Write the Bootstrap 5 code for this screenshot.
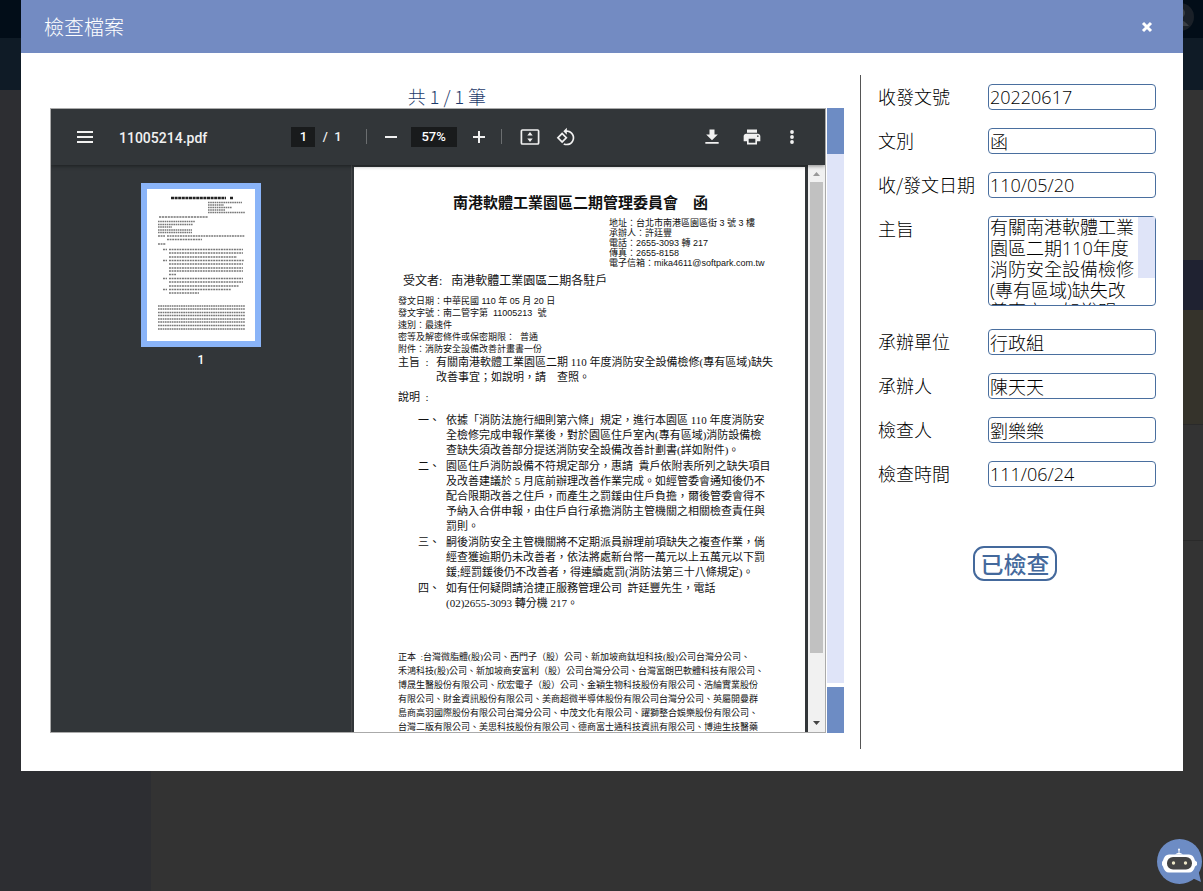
<!DOCTYPE html>
<html lang="zh-Hant">
<head>
<meta charset="utf-8">
<meta name="viewport" content="width=device-width, initial-scale=1">
<title>檢查檔案</title>
<link rel="stylesheet" href="https://cdn.jsdelivr.net/npm/bootstrap@5.3.0/dist/css/bootstrap.min.css">
<style>
  body { font-family: "Noto Sans CJK TC", sans-serif; font-weight: 300; background: #333; color: #000; overflow: hidden; }
  .app-top { height: 38px; background: #020d18; }
  .app-nav { height: 52px; background: #0f1b26; }
  .app-side { flex: 0 0 151px; background: #2d2e32; }
  .app-strip { height: 50px; margin-top: 170px; background: #1f2231; }
  .app-note { height: 115px; background: #35332b; border-bottom: 1px solid #2a2a2a; }
  .app-line { height: 116px; border-bottom: 1px solid #2a2a2a; }

  .check-dialog { max-width: none; margin: 0 20px 0 21px; }
  .check-head { height: 53px; background: #738bc2; color: #fff; padding: 0 28px 0 23px; }
  .check-head h1 { font-size: 20px; font-weight: 300; }
  .check-body { padding: 22px 27px 22px 29px; }
  .file-side { min-width: 0; padding-bottom: 16px; }

  .count-line { height: 33px; line-height: 42px; font-size: 18px; color: #1d3a6b; }
  .viewer { height: calc(100vh - 266px); }
  .outer-bar { flex: 0 0 18px; padding-left: 1px; }
  .outer-end { height: 46px; background: #6d8cc4; }
  .outer-track { background: #dfe4f8; margin-bottom: 4px; }
  .pdf { background: #323639; border: 1px solid #aaa; font-family: Roboto, sans-serif; }
  .pdf-tools { height: 56px; padding: 0 21px 0 22px; color: #f1f1f1; box-shadow: 0 1px 4px rgba(0,0,0,.45); z-index: 1; font-size: 13px; font-weight: 500; }
  .tool-end { flex: 1 1 0; }
  .tool-mid { margin-right: 4px; }
  .tool-btn { background: none; border: 0; padding: 0; width: 24px; height: 24px; color: #f1f1f1; display: flex; align-items: center; justify-content: center; }
  .close-btn { width: 16px; color: #fff; }
  .pdf-name { font-size: 14px; font-weight: 500; line-height: 24px; margin-left: 22px; padding-top: 2px; }
  .dark-in { background: #191b1c; border: 0; color: #fff; height: 20px; padding: 0; text-align: center; font-weight: 500; }
  .in-page { width: 24px; }
  .in-zoom { width: 46px; }
  .tool-sep { width: 1px; height: 15px; background: #6b6e70; }
  .thumbs { flex: 0 0 301px; padding-top: 18px; border-right: 1px solid #46484a; color: #fff; font-size: 12px; font-weight: 500; }
  .thumb-frame { width: 120px; border: 6px solid #8ab4f8; background: #fff; }
  .pdf-page { background: #fff; margin: 2px 3px 0 2px; padding: 26px 36px 0 44px; font-family: "Liberation Serif", "Noto Sans CJK TC", sans-serif; font-weight: 400; font-size: 11px; line-height: 15px; color: #111; overflow: hidden; white-space: nowrap; }
  .doc-title { font-size: 15px; line-height: 20px; font-weight: 700; padding-left: 55px; margin: 0 0 5px; }
  .doc-addr { font: 400 9px/10px "Liberation Sans", "Noto Sans CJK TC", sans-serif; padding-left: 211px; margin-bottom: 5px; }
  .doc-to { font-size: 12px; line-height: 16px; padding-left: 5px; margin-bottom: 6px; }
  .doc-meta { font: 400 9px/12px "Liberation Sans", "Noto Sans CJK TC", sans-serif; }
  .doc-key { flex: 0 0 38px; }
  .doc-no { flex: 0 0 28px; }
  .doc-desc { margin-top: 5px; }
  .doc-list { gap: 1px; margin: 8px 0 39px 20px; }
  .doc-cc { font-size: 9px; line-height: 14px; }
  .inner-bar { flex: 0 0 17px; background: #f1f1f1; }
  .inner-thumb { width: 13px; flex: 0 0 83%; background: #c1c1c1; }

  .form-side { flex: 0 0 296px; border-left: 1px solid #555; margin-left: 16px; padding: 9px 0 0 17px; font-size: 18px; }
  .form-side label { flex: 0 0 110px; line-height: 24px; }
  .field-row { margin-bottom: 18px; }
  .field-in { min-width: 0; width: 100%; height: 26px; border: 1px solid #4a6f9f; border-radius: 4px; padding: 0 1px; font-family: "Open Sans", "Noto Sans CJK TC", sans-serif; font-size: 18px; font-weight: 300; line-height: 21px; color: #000; }
  .field-area { height: 90px; resize: none; overflow: hidden; padding-right: 18px; display: block; }
  .area-row { margin-bottom: 23px; }
  .area-thumb { top: 1px; right: 1px; width: 17px; height: 61px; background: #dfe4f8; }
  .done-btn { margin-top: 41px; width: 84px; height: 35px; border: 2px solid #44699c; border-radius: 11px; background: #fff; color: #44699c; font-size: 23px; font-weight: 500; line-height: 26px; padding: 0 0 2px; }
  .bot { right: 0; bottom: 6px; z-index: 1060; border: 0; padding: 0; background: none; line-height: 0; }
</style>
</head>
<body>
<div class="vh-100 d-flex flex-column">
  <div class="app-top d-flex justify-content-end">
    <svg width="35" height="38" viewBox="0 0 35 38"><circle cx="12" cy="17" r="14" fill="#1a2028"/><circle cx="12" cy="13" r="5" fill="#3b3f45"/><path d="M1 26q11-12 20 0z" fill="#3b3f45"/></svg>
  </div>
  <div class="app-nav"></div>
  <div class="d-flex flex-grow-1">
    <div class="app-side"></div>
    <div class="flex-grow-1"><div class="app-strip"></div><div class="app-note"></div><div class="app-line"></div></div>
  </div>
</div>

<div class="modal d-block" tabindex="-1" role="dialog" aria-labelledby="dlgTitle">
  <div class="modal-dialog check-dialog">
    <div class="modal-content border-0 rounded-0">
      <div class="check-head d-flex align-items-center justify-content-between">
        <h1 id="dlgTitle" class="m-0">檢查檔案</h1>
        <button class="tool-btn close-btn" type="button" aria-label="關閉"><svg width="12" height="12" viewBox="0 0 12 12"><path d="M2 2l8 8M10 2l-8 8" stroke="currentColor" stroke-width="3"/></svg></button>
      </div>
      <div class="check-body d-flex">
        <div class="file-side flex-grow-1 d-flex flex-column">
          <div class="count-line text-center">共 1 / 1 筆</div>
          <div class="viewer d-flex">
            <div class="pdf flex-grow-1 d-flex flex-column overflow-hidden">
              <div class="pdf-tools d-flex align-items-center position-relative">
                <div class="tool-end d-flex align-items-center">
                  <button class="tool-btn" type="button" aria-label="選單"><svg width="16" height="12" viewBox="0 0 16 12"><path d="M0 1h16M0 6h16M0 11h16" stroke="currentColor" stroke-width="2"/></svg></button>
                  <span class="pdf-name">11005214.pdf</span>
                </div>
                <div class="tool-mid d-flex align-items-center">
                  <input class="dark-in in-page" value="1" aria-label="頁碼"><span class="ms-1 me-4">&nbsp;/&nbsp; 1</span>
                  <span class="tool-sep me-2"></span>
                  <button class="tool-btn ms-1 me-2" type="button" aria-label="縮小"><svg width="12" height="12" viewBox="0 0 12 12"><path d="M0 6h12" stroke="currentColor" stroke-width="2"/></svg></button>
                  <input class="dark-in in-zoom" value="57%" aria-label="縮放">
                  <button class="tool-btn mx-2 ps-1" type="button" aria-label="放大"><svg width="12" height="12" viewBox="0 0 12 12"><path d="M0 6h12M6 0v12" stroke="currentColor" stroke-width="2"/></svg></button>
                  <span class="tool-sep ms-1 me-3"></span>
                  <button class="tool-btn" type="button" aria-label="符合頁面大小"><svg width="20" height="20" viewBox="0 0 20 20"><rect x="1.4" y="3" width="17.2" height="14" rx="1" fill="none" stroke="currentColor" stroke-width="1.7"/><path d="M10 5l2.7 3.4H7.300zM10 15l2.700-3.400H7.300z" fill="currentColor"/></svg></button>
                  <button class="tool-btn ms-2 ps-2 me-2" type="button" aria-label="旋轉"><svg class="flex-shrink-0" width="20" height="20" viewBox="0 0 24 24" fill="currentColor"><path d="M7.340 6.410L.86 12.900l6.490 6.480 6.490-6.480-6.500-6.490zM3.690 12.900l3.660-3.660L11 12.900l-3.660 3.660-3.650-3.660zm15.670-6.260C17.610 4.880 15.300 4 13 4V.76L8.760 5 13 9.240V6c1.790 0 3.580.68 4.950 2.050 2.730 2.730 2.730 7.170 0 9.900C16.580 19.320 14.790 20 13 20c-.97 0-1.940-.21-2.840-.61l-1.490 1.490C10.020 21.620 11.510 22 13 22c2.300 0 4.610-.88 6.360-2.640 3.520-3.510 3.520-9.210 0-12.720z"/></svg></button>
                </div>
                <div class="tool-end d-flex align-items-center justify-content-end gap-3">
                  <button class="tool-btn" type="button" aria-label="下載"><svg width="20" height="20" viewBox="0 0 24 24" fill="currentColor"><path d="M19 9h-4V3H9v6H5l7 7 7-7zM4 18v2.200h16V18z"/></svg></button>
                  <button class="tool-btn" type="button" aria-label="列印"><svg width="20" height="20" viewBox="0 0 24 24" fill="currentColor"><path d="M19 8H5c-1.660 0-3 1.340-3 3v6h4v4h12v-4h4v-6c0-1.660-1.340-3-3-3zm-3 11H8v-5h8v5zm3-7c-.55 0-1-.45-1-1s.45-1 1-1 1 .45 1 1-.45 1-1 1zm-1-9H6v4h12V3z"/></svg></button>
                  <button class="tool-btn" type="button" aria-label="更多"><svg width="4" height="16" viewBox="0 0 4 16" fill="currentColor"><circle cx="2" cy="3" r="1.900"/><circle cx="2" cy="8" r="1.900"/><circle cx="2" cy="13" r="1.900"/></svg></button>
                </div>
              </div>
              <div class="d-flex flex-grow-1 overflow-hidden">
                <div class="thumbs d-flex flex-column align-items-center">
                  <div class="thumb-frame">
                    <svg class="d-block w-100" viewBox="0 0 108 152" fill="none" stroke="#777" stroke-width="1.300" role="img" aria-label="第 1 頁縮圖">
                      <path stroke="#222" stroke-width="2.600" stroke-dasharray="3 .6" d="M24 9h55M83 9h3"/>
                      <path stroke-dasharray="1.600 .6" d="M61 13.500h34M61 16h16M61 18.500h24M61 21h17M61 23.500h37"/>
                      <path stroke-dasharray="2.200 .7" d="M12 28h49"/>
                      <path stroke-dasharray="1.600 .6" d="M11 32.500h37M11 35.500h35M11 38h14M11 41h34M11 43.500h34"/>
                      <path stroke-dasharray="1.900 .7" d="M11 47h7M20 47h78M20 50.500h35M11 55h8M16 60.500h4M22 60.500h74M22 64h74M22 68h68M16 71.500h4M22 71.500h75M22 75h74M22 79h74M22 82h74M22 85.500h7M16 89.500h4M22 89.500h74M22 93h74M22 97h70M16 100.500h4M22 100.500h62M22 104h30"/>
                      <path stroke-dasharray="1.700 .6" d="M11 117h87M11 120h87M11 123.500h87M11 126.500h87M11 130h87M11 133h87M11 136.500h87M11 140h87"/>
                    </svg>
                  </div>
                  <span class="mt-1">1</span>
                </div>
                <article class="pdf-page flex-grow-1">
                  <h2 class="doc-title">南港軟體工業園區二期管理委員會　函</h2>
                  <div class="doc-addr">
                    <div>地址：台北市南港區園區街 3 號 3 樓</div>
                    <div>承辦人：許廷豐</div>
                    <div>電話：2655-3093 轉 217</div>
                    <div>傳真：2655-8158</div>
                    <div>電子信箱：mika4611@softpark.com.tw</div>
                  </div>
                  <div class="doc-to">受文者:&nbsp;&nbsp; 南港軟體工業園區二期各駐戶</div>
                  <div class="doc-meta">
                    <div>發文日期：中華民國 110 年 05 月 20 日</div>
                    <div>發文字號：南二管字第&nbsp; 11005213&nbsp; 號</div>
                    <div>速別：最速件</div>
                    <div>密等及解密條件或保密期限：&nbsp; 普通</div>
                    <div>附件：消防安全設備改善計畫書一份</div>
                  </div>
                  <div class="d-flex"><div class="doc-key">主旨&nbsp; :</div><div>有關南港軟體工業園區二期 110 年度消防安全設備檢修(專有區域)缺失<br>改善事宜；如說明，請　查照。</div></div>
                  <div class="doc-desc">說明&nbsp; :</div>
                  <div class="doc-list d-flex flex-column">
                    <div class="d-flex"><div class="doc-no">一、</div><div>依據「消防法施行細則第六條」規定，進行本園區 110 年度消防安<br>全檢修完成申報作業後，對於園區住戶室內(專有區域)消防設備檢<br>查缺失須改善部分提送消防安全設備改善計劃書(詳如附件)。</div></div>
                    <div class="d-flex"><div class="doc-no">二、</div><div>園區住戶消防設備不符規定部分，惠請&nbsp; 貴戶依附表所列之缺失項目<br>及改善建議於 5 月底前辦理改善作業完成。如經管委會通知後仍不<br>配合限期改善之住戶，而產生之罰鍰由住戶負擔，爾後管委會得不<br>予納入合併申報，由住戶自行承擔消防主管機關之相關檢查責任與<br>罰則。</div></div>
                    <div class="d-flex"><div class="doc-no">三、</div><div>嗣後消防安全主管機關將不定期派員辦理前項缺失之複查作業，倘<br>經查獲逾期仍未改善者，依法將處新台幣一萬元以上五萬元以下罰<br>鍰;經罰鍰後仍不改善者，得連續處罰(消防法第三十八條規定)。</div></div>
                    <div class="d-flex"><div class="doc-no">四、</div><div>如有任何疑問請洽捷正服務管理公司&nbsp; 許廷豐先生，電話<br>(02)2655-3093 轉分機 217。</div></div>
                  </div>
                  <div class="doc-cc">正本&nbsp; :台灣微脂體(股)公司、西門子（股）公司、新加坡商鈦坦科技(股)公司台灣分公司、<br>禾鴻科技(股)公司、新加坡商安富利（股）公司台灣分公司、台灣富朗巴軟體科技有限公司、<br>博晟生醫股份有限公司、欣宏電子（股）公司、金穎生物科技股份有限公司、浩綸實業股份<br>有限公司、財金資訊股份有限公司、美商超微半導体股份有限公司台灣分公司、英屬開曼群<br>島商高羽國際股份有限公司台灣分公司、中茂文化有限公司、躍獅整合娛樂股份有限公司、<br>台灣二版有限公司、美思科技股份有限公司、德商富士通科技資訊有限公司、博迪生技醫藥</div>
                </article>
                <div class="inner-bar d-flex flex-column align-items-center">
                  <svg width="17" height="17" viewBox="0 0 17 17" class="flex-shrink-0"><path d="M5 11h7l-3.500-4z" fill="#999"/></svg>
                  <div class="inner-thumb"></div>
                  <svg width="17" height="17" viewBox="0 0 17 17" class="flex-shrink-0 mt-auto"><path d="M5 6h7l-3.500 4z" fill="#444"/></svg>
                </div>
              </div>
            </div>
            <div class="outer-bar d-flex flex-column">
              <div class="outer-end"></div>
              <div class="outer-track flex-grow-1"></div>
              <div class="outer-end"></div>
            </div>
          </div>
        </div>
        <form class="form-side">
          <div class="field-row d-flex"><label for="f1">收發文號</label><input id="f1" class="field-in" value="20220617"></div>
          <div class="field-row d-flex"><label for="f2">文別</label><input id="f2" class="field-in" value="函"></div>
          <div class="field-row d-flex"><label for="f3">收/發文日期</label><input id="f3" class="field-in" value="110/05/20"></div>
          <div class="area-row d-flex"><label for="f4">主旨</label><div class="position-relative flex-grow-1"><textarea id="f4" class="field-in field-area">有關南港軟體工業園區二期110年度消防安全設備檢修(專有區域)缺失改善事宜；如說明，請查照。</textarea><div class="area-thumb position-absolute"></div></div></div>
          <div class="field-row d-flex"><label for="f5">承辦單位</label><input id="f5" class="field-in" value="行政組"></div>
          <div class="field-row d-flex"><label for="f6">承辦人</label><input id="f6" class="field-in" value="陳天天"></div>
          <div class="field-row d-flex"><label for="f7">檢查人</label><input id="f7" class="field-in" value="劉樂樂"></div>
          <div class="field-row d-flex"><label for="f8">檢查時間</label><input id="f8" class="field-in" value="111/06/24"></div>
          <div class="text-center pe-1"><button type="button" class="done-btn">已檢查</button></div>
        </form>
      </div>
    </div>
  </div>
</div>

<button class="bot position-fixed" type="button" aria-label="客服機器人">
  <svg width="46" height="46" viewBox="0 0 46 46"><path d="M33 38l11 5-3-13z" fill="#6d8cc4"/><circle cx="22.500" cy="22.500" r="22.500" fill="#6d8cc4"/><circle cx="22" cy="10.500" r="1" fill="#fff"/><path d="M21.500 11h1v3h-1zM18 15.500q4-3.500 8 0z" fill="#fff"/><path d="M12 15.500h20q4.500 0 6 6l2 1.500v3l-2 1.500q-1.500 6-6 6H12q-4.500 0-6-6L5 26v-3l1-1.500q1.500-6 6-6z" fill="#fff"/><rect x="10" y="18" width="25" height="12.500" rx="6" fill="#444"/><circle cx="16.500" cy="24" r="1.700" fill="#eee8c8"/><circle cx="28.500" cy="24" r="1.700" fill="#eee8c8"/></svg>
</button>
<script src="https://cdn.jsdelivr.net/npm/bootstrap@5.3.0/dist/js/bootstrap.bundle.min.js"></script>
</body>
</html>
